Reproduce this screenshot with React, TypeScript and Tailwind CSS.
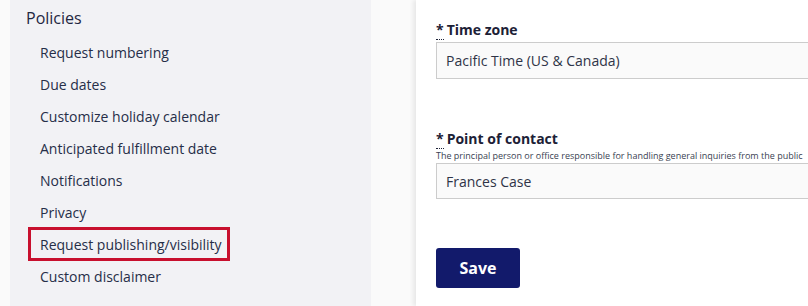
import React from "react";

const items = [
  "Request numbering",
  "Due dates",
  "Customize holiday calendar",
  "Anticipated fulfillment date",
  "Notifications",
  "Privacy",
  "Request publishing/visibility",
  "Custom disclaimer",
];

function Label({ text }: { text: string }) {
  return (
    <div className="h-[22px] leading-[22px] text-[14px] font-bold text-[#1c2136]">
      <abbr className="no-underline border-b border-dotted border-[#1c2136] mr-[3px]" title="required">
        *
      </abbr>
      {text}
    </div>
  );
}

export default function App() {
  return (
    <div
      className="flex w-[808px] h-[306px] overflow-hidden bg-[#fafafa] pl-[10px]"
      style={{ fontFamily: '"Open Sans", "Noto Sans", sans-serif' }}
    >
      <div className="w-[361px] shrink-0 bg-[#f2f2f5] pt-[6px]">
        <div className="pl-[16px] h-[24px] leading-[24px] text-[16px] text-[#1f2742]">Policies</div>
        <div className="mt-[6px] flex flex-col">
          {items.map((it) => (
            <div key={it} className="h-[32px] flex items-center pl-[30px] text-[14px] text-[#262e48]">
              {it === "Request publishing/visibility" ? (
                <span className="h-[34px] w-[202px] -ml-[12px] pl-[9px] border-[3px] border-[#c8102e] flex items-center whitespace-nowrap">
                  {it}
                </span>
              ) : (
                <span>{it}</span>
              )}
            </div>
          ))}
        </div>
      </div>
      <div className="w-[45px] shrink-0" />
      <div className="flex-1 min-w-[480px] bg-white shadow-[-3px_0_4px_rgba(0,0,0,0.07)] pl-[20px] pt-[19px]">
        <Label text="Time zone" />
        <div className="mt-[1px] w-[440px] h-[37px] border border-[#cccccc] bg-[#fafafa] flex items-center pl-[9px] text-[14px] text-[#2f3447]">
          Pacific Time (US &amp; Canada)
        </div>
        <div className="mt-[49px]">
          <Label text="Point of contact" />
        </div>
        <div className="h-[12px] leading-[12px] text-[9px] text-[#3a3f52] whitespace-nowrap">
          The principal person or office responsible for handling general inquiries from the public
        </div>
        <div className="mt-[1px] w-[440px] h-[36px] border border-[#cccccc] bg-[#fafafa] flex items-center pl-[9px] text-[14px] text-[#2f3447]">
          Frances Case
        </div>
        <button className="mt-[49px] w-[84px] h-[40px] rounded-[3px] bg-[#121a6b] text-white text-[16px] font-bold flex items-center justify-center">
          Save
        </button>
      </div>
    </div>
  );
}
